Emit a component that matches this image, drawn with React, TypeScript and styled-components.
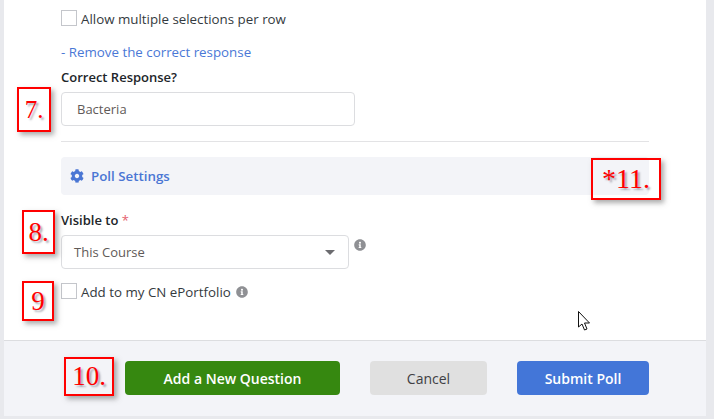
import { ReactNode } from "react";
import styled, { createGlobalStyle } from "styled-components";
import { FaCog, FaInfoCircle } from "react-icons/fa";

const GlobalStyle = createGlobalStyle`
  html, body {
    margin: 0;
    padding: 0;
    background: #e8e9ed;
    overflow: hidden;
  }
  * {
    box-sizing: border-box;
  }
`;

const Page = styled.div`
  position: relative;
  width: 714px;
  height: 419px;
  padding-left: 4px;
  font-family: "Open Sans", "Liberation Sans", sans-serif;
  font-size: 13px;
  color: #212529;
`;
const Card = styled.div`
  width: 702px;
  height: 416px;
  background: #fff;
  display: flex;
  flex-direction: column;
`;
const Body = styled.div`
  flex: 1;
  padding: 10px 57px 0;
  display: flex;
  flex-direction: column;
`;
const CheckRow = styled.label<{ $top?: number }>`
  display: flex;
  align-items: center;
  height: 16px;
  margin-top: ${(props) => props.$top || 0}px;
  font-size: 13.33px;
  color: #343a40;
`;
const Box = styled.span`
  width: 16px;
  height: 16px;
  border: 1px solid #c4c6cb;
  background: #fff;
  margin-right: 4px;
`;
const CheckText = styled.span`
  display: flex;
  align-items: center;
  line-height: 18px;
  padding-top: 2px;
`;
const RemoveLink = styled.a`
  margin-top: 17px;
  height: 18px;
  line-height: 18px;
  font-size: 13.33px;
  color: #4a78d6;
`;
const FieldLabel = styled.div<{ $top: number }>`
  margin-top: ${(props) => props.$top}px;
  height: 18px;
  line-height: 18px;
  font-weight: 600;
  color: #212529;
`;
const Required = styled.span`
  color: #e4606d;
  font-weight: 400;
`;
const TextField = styled.div`
  margin-top: 6px;
  width: 294px;
  height: 34px;
  border: 1px solid #dcdde0;
  border-radius: 4px;
  padding-left: 15px;
  line-height: 32px;
  color: #5f5a58;
`;
const Divider = styled.hr`
  margin: 15px 0 0;
  border: 0;
  border-top: 1px solid #e3e3e5;
  width: 588px;
`;
const SettingsBar = styled.div`
  margin-top: 15px;
  width: 588px;
  height: 38px;
  background: #f3f4f8;
  border-radius: 4px;
  padding-left: 9px;
  display: flex;
  align-items: center;
  gap: 7px;
  font-size: 13.33px;
  font-weight: 600;
  color: #4a76d4;
  svg {
    width: 14px;
    height: 14px;
  }
`;
const SelectRow = styled.div`
  margin-top: 6px;
  display: flex;
  align-items: flex-start;
  gap: 5px;
`;
const SelectBox = styled.div`
  width: 288px;
  height: 34px;
  border: 1px solid #dcdde0;
  border-radius: 4px;
  padding: 0 13px 0 12px;
  display: flex;
  align-items: center;
  justify-content: space-between;
  color: #5f5a58;
`;
const Caret = styled.span`
  width: 0;
  height: 0;
  border-left: 5px solid transparent;
  border-right: 5px solid transparent;
  border-top: 5px solid #6b6b6f;
  margin-top: 1px;
`;
const InfoIcon = styled(FaInfoCircle)<{ $top?: number; $left?: number }>`
  width: 12px;
  height: 12px;
  color: #8f9094;
  margin-top: ${(props) => props.$top || 0}px;
  margin-left: ${(props) => props.$left || 0}px;
`;
const Footer = styled.div`
  height: 76px;
  border-top: 1px solid #dcdde0;
  background: #f3f4f8;
  padding: 20px 57px 0 0;
  display: flex;
  justify-content: flex-end;
  align-items: flex-start;
  gap: 30px;
`;
const Button = styled.button<{ $bg: string; $fg: string; $width: number; $weight: number }>`
  width: ${(props) => props.$width}px;
  height: 34px;
  border: 0;
  border-radius: 4px;
  background: ${(props) => props.$bg};
  color: ${(props) => props.$fg};
  font-family: inherit;
  font-size: 14px;
  font-weight: ${(props) => props.$weight};
  padding: 0;
`;
const Callout = styled.div<{ $x: number; $y: number; $w: number; $h: number; $size: number }>`
  position: absolute;
  left: ${(props) => props.$x}px;
  top: ${(props) => props.$y}px;
  width: ${(props) => props.$w}px;
  height: ${(props) => props.$h}px;
  border: 2px solid #ff0000;
  box-shadow: 3px 3px 5px rgba(90, 90, 90, 0.5);
  font-family: "Liberation Serif", "Times New Roman", serif;
  font-size: ${(props) => props.$size}px;
  color: #ff0000;
  text-shadow: 2px 2px 2px rgba(70, 70, 90, 0.45);
  display: flex;
  align-items: center;
  justify-content: center;
  white-space: nowrap;
`;
const Pointer = styled.svg`
  position: absolute;
  left: 578px;
  top: 311px;
  width: 14px;
  height: 20px;
`;

const CALLOUTS: { label: string; x: number; y: number; w: number; h: number; size: number }[] = [
  { label: "7.", x: 17, y: 87, w: 34, h: 45, size: 25 },
  { label: "*11.", x: 591, y: 158, w: 70, h: 42, size: 28 },
  { label: "8.", x: 22, y: 210, w: 33, h: 44, size: 27 },
  { label: "9", x: 22, y: 281, w: 32, h: 40, size: 27 },
  { label: "10.", x: 64, y: 357, w: 50, h: 39, size: 27 },
];

const Check = ({ children, top }: { children: ReactNode; top?: number }) => {
  return (
    <CheckRow $top={top}>
      <Box />
      <CheckText>{children}</CheckText>
    </CheckRow>
  );
};

const App = () => {
  return (
    <Page>
      <GlobalStyle />
      <Card>
        <Body>
          <Check>Allow multiple selections per row</Check>
          <RemoveLink>- Remove the correct response</RemoveLink>
          <FieldLabel $top={7}>Correct Response?</FieldLabel>
          <TextField>Bacteria</TextField>
          <Divider />
          <SettingsBar>
            <FaCog />
            Poll Settings
          </SettingsBar>
          <FieldLabel $top={16}>
            Visible to <Required>*</Required>
          </FieldLabel>
          <SelectRow>
            <SelectBox>
              This Course
              <Caret />
            </SelectBox>
            <InfoIcon $top={4} />
          </SelectRow>
          <Check top={14}>
            Add to my CN ePortfolio
            <InfoIcon $left={5} />
          </Check>
        </Body>
        <Footer>
          <Button $bg="#368810" $fg="#fff" $width={215} $weight={600}>
            Add a New Question
          </Button>
          <Button $bg="#e0e0e0" $fg="#3f3f44" $width={117} $weight={400}>
            Cancel
          </Button>
          <Button $bg="#4376d8" $fg="#fff" $width={132} $weight={600}>
            Submit Poll
          </Button>
        </Footer>
      </Card>
      {CALLOUTS.map((c) => (
        <Callout key={c.label} $x={c.x} $y={c.y} $w={c.w} $h={c.h} $size={c.size}>
          {c.label}
        </Callout>
      ))}
      <Pointer viewBox="0 0 14 20">
        <path
          d="M0.5 0.5 L0.5 16 L4 13 L6.5 19 L9 18 L6.5 12 L11.5 12 Z"
          fill="#fff"
          stroke="#111"
          strokeWidth="1"
        />
      </Pointer>
    </Page>
  );
};

export default App;
